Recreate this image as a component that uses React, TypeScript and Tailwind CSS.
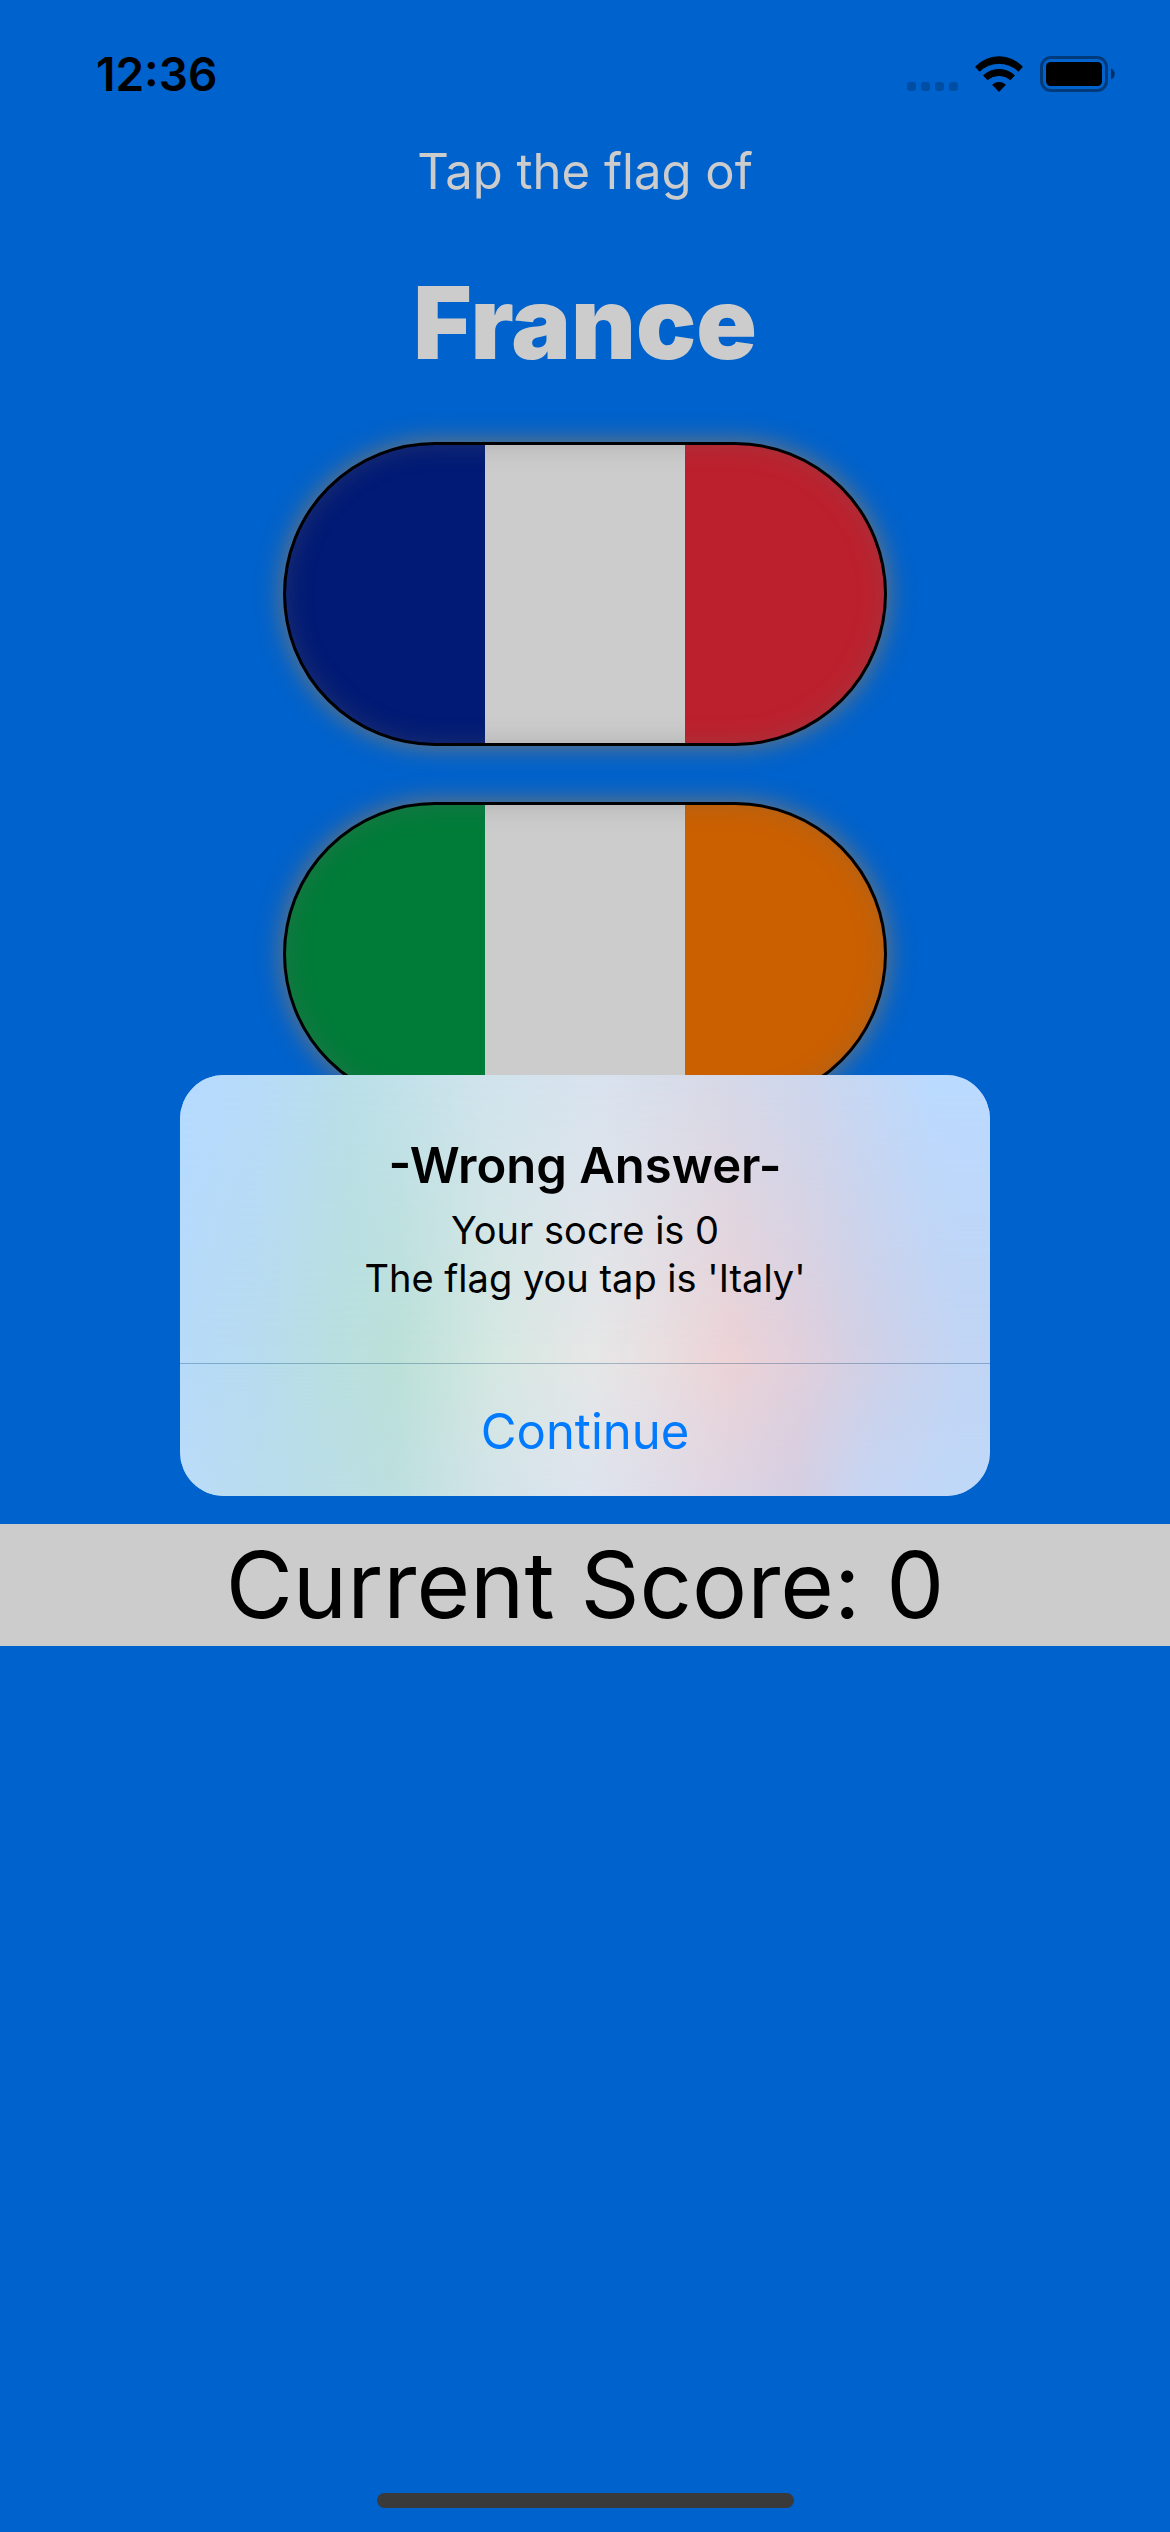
import { useState } from "react";

type Flag = { country: string; stripes: [string, string, string] };

const flags: Flag[] = [
  { country: "France", stripes: ["bg-[#001a75]", "bg-[#cccccc]", "bg-[#bd202d]"] },
  { country: "Ireland", stripes: ["bg-[#007c39]", "bg-[#cccccc]", "bg-[#cb6000]"] },
  { country: "Italy", stripes: ["bg-[#00743a]", "bg-[#cccccc]", "bg-[#a5212b]"] },
];

function WifiIcon() {
  return (
    <svg viewBox="0 0 48 36" className="h-9 w-12" aria-label="Wi-Fi" role="img">
      <g fill="#000" stroke="#000" strokeWidth="1" strokeLinejoin="round">
        <path d="M.6 10.8A32.3 32.3 0 0 1 47.4 10.8L43.4 15.2A27.8 27.8 0 0 0 4.6 15.2Z" />
        <path d="M8.6 19.4A23 23 0 0 1 39.4 19.4L35.5 23.7A17.5 17.5 0 0 0 12.5 23.7Z" />
        <path d="M17.6 28.8A10 10 0 0 1 30.4 28.8L24 35.4Z" />
      </g>
    </svg>
  );
}

function BatteryIcon() {
  return (
    <svg viewBox="0 0 75 36" className="h-9 w-[75px]" aria-label="Battery full" role="img">
      <rect x="1.5" y="1.5" width="65" height="33" rx="9.5" fill="none" stroke="#000" strokeOpacity=".4" strokeWidth="3" />
      <rect x="6" y="6" width="56" height="24" rx="4.5" fill="#000" />
      <path d="M71 12.5C76 14.5 76 21.5 71 23.5Z" fill="#000" fillOpacity=".5" />
    </svg>
  );
}

function StatusBar() {
  return (
    <header className="flex h-[141px] items-start justify-between pt-11 pr-[55px] pl-24">
      <time className="text-[46px] leading-[60px] font-semibold">12:36</time>
      <div className="flex h-[60px] items-center">
        <div className="flex gap-[5px] self-end pb-[13px]">
          {[0, 1, 2, 3].map((i) => (
            <span key={i} className="size-[9px] rounded-[3px] bg-black/20" />
          ))}
        </div>
        <div className="ml-[17px] flex items-center gap-[17px]">
          <WifiIcon />
          <BatteryIcon />
        </div>
      </div>
    </header>
  );
}

function FlagButton({ flag }: { flag: Flag }) {
  return (
    <button
      type="button"
      aria-label={`Flag of ${flag.country}`}
      className="relative flex h-[300px] w-[600px] rounded-full shadow-[0_0_24px_3px_rgba(125,118,108,0.9)]"
    >
      <span className="flex h-full w-full overflow-hidden rounded-full">
        {flag.stripes.map((color) => (
          <span key={color} className={`h-full flex-1 ${color}`} />
        ))}
      </span>
      <span className="absolute -inset-0.5 rounded-full border-[3px] border-black shadow-[inset_0_0_26px_rgba(102,102,102,0.3)]" />
    </button>
  );
}

function ResultAlert({ onContinue }: { onContinue: () => void }) {
  return (
    <div className="absolute inset-0 flex items-center justify-center pt-[141px] pb-[102px]">
      <div
        role="alertdialog"
        aria-labelledby="alert-title"
        aria-describedby="alert-message"
        className="relative w-[810px] overflow-hidden rounded-[44px] bg-[linear-gradient(90deg,#b7dbf9_0%,#b8dcf0_9%,#badfe2_18%,#bce1d9_27%,#d6e8e2_39%,#e6e7e7_51%,#e9dfe1_59%,#ecd3d7_68%,#e0d0dd_77%,#cfd1e8_86%,#c2d5f4_96%,#c2d5f4_100%)] text-center"
      >
        <div className="absolute inset-0 bg-[linear-gradient(90deg,#b5daff_0%,#b7dbf8_10%,#b9dfe8_21%,#d0e3ec_38%,#d8e2ee_52%,#d7d9e7_66%,#cbd6ee_79%,#badaff_93%,#badaff_100%)] [mask-image:linear-gradient(180deg,#000_0%,transparent_65%)]" />
        <div className="absolute inset-0 bg-[linear-gradient(90deg,#bbdcf9_0%,#b9dcee_9%,#bcdfdf_26%,#d2e3e8_38%,#dde4ee_50%,#dfd7e3_65%,#d5cee2_76%,#c5d5f3_85%,#bfd8f8_95%,#bfd8f8_100%)] [mask-image:linear-gradient(0deg,#000_0%,transparent_32%)]" />
        <div className="relative border-b border-[#003c6e]/30 pt-[60px] pb-[61px]">
          <h2 id="alert-title" className="text-[49px] leading-[61px] font-semibold">
            -Wrong Answer-
          </h2>
          <p id="alert-message" className="mt-[10px] text-[38px] leading-[48px]">
            Your socre is 0
            <br />
            The flag you tap is 'Italy'
          </p>
        </div>
        <button
          type="button"
          onClick={onContinue}
          className="relative h-[132px] w-full pt-0.5 text-[49px] leading-[61px] text-[#007aff]"
        >
          Continue
        </button>
      </div>
    </div>
  );
}

export default function App() {
  const [alertOpen, setAlertOpen] = useState(true);

  return (
    <div className="relative flex min-h-screen flex-col bg-[#0062cc] font-['Inter',sans-serif] text-black">
      <StatusBar />
      <main className="flex flex-col items-center gap-[60px]">
        <p className="text-[49px] leading-[61px] text-[#cccccc]">Tap the flag of</p>
        <h1 className="text-[100px] leading-[122px] font-black text-[#cccccc]">France</h1>
        {flags.map((flag) => (
          <FlagButton key={flag.country} flag={flag} />
        ))}
        <p className="w-full bg-[#cccccc] text-center text-[92px] leading-[122px]">Current Score: 0</p>
      </main>
      <footer className="mt-auto flex justify-center pt-6 pb-6">
        <span className="h-[15px] w-[417px] rounded-full bg-[#3a3a3a]" />
      </footer>
      {alertOpen && <ResultAlert onContinue={() => setAlertOpen(false)} />}
    </div>
  );
}
